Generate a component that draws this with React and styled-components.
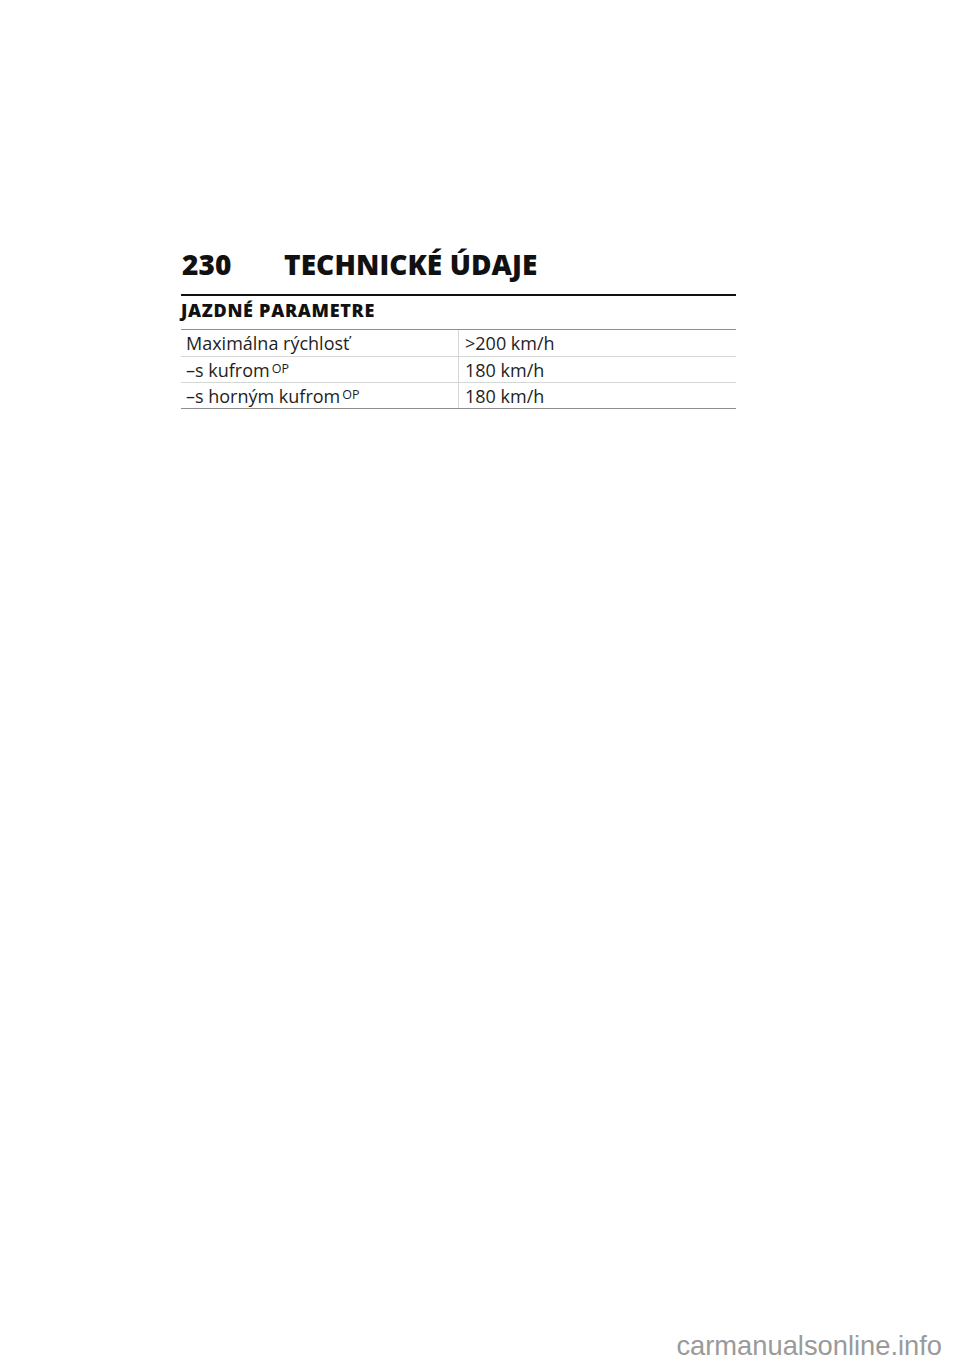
import React from "react";
import styled, { createGlobalStyle } from "styled-components";

const GlobalStyle = createGlobalStyle`
  html, body {
    margin: 0;
    padding: 0;
    background: #ffffff;
  }
  body {
    font-family: "Open Sans", "Liberation Sans", sans-serif;
    color: #1a1a1a;
  }
`;

const Page = styled.div`
  width: 960px;
  min-height: 1362px;
  display: flex;
  flex-direction: column;
  box-sizing: border-box;
`;

const Content = styled.div`
  margin: 244px 0 0 181px;
  width: 555px;
`;

const PageTitle = styled.h1`
  display: flex;
  margin: 0;
  height: 39px;
  align-items: center;
  font-family: "Open Sans", "Liberation Sans", sans-serif;
  font-weight: 800;
  font-size: 28px;
  letter-spacing: 0.1px;
  color: #111;
`;

const PageNumber = styled.span`
  width: 102px;
  padding-left: 1px;
`;

const SectionTitle = styled.h2`
  margin: 11px 0 0;
  border-top: 2px solid #111;
  padding-top: 3px;
  height: 35px;
  box-sizing: border-box;
  font-family: "Open Sans", "Liberation Sans", sans-serif;
  font-weight: 800;
  font-size: 18px;
  letter-spacing: 0.7px;
  line-height: 22px;
  color: #111;
`;

const Table = styled.div`
  border-top: 1px solid #8e8e8e;
  border-bottom: 1px solid #8e8e8e;
`;

const Row = styled.div`
  display: grid;
  grid-template-columns: 277px 1fr;
  height: 25px;
  &:first-child {
    height: 26px;
  }
  & + & {
    border-top: 1px solid #d3d7d5;
  }
`;

const Cell = styled.div`
  display: flex;
  align-items: center;
  padding-left: ${(p) => (p.$value ? "6px" : "5px")};
  border-left: ${(p) => (p.$value ? "1px solid #d3d7d5" : "none")};
  font-size: 18px;
  color: #1e1e1e;
  white-space: nowrap;
`;

const Sup = styled.sup`
  font-size: 12.5px;
  margin-left: 2px;
  position: relative;
  top: -1px;
`;

const Watermark = styled.div`
  margin-top: auto;
  align-self: flex-end;
  padding: 0 18px 3px 0;
  font-family: "Liberation Sans", Arial, sans-serif;
  font-size: 27.3px;
  color: #9a9a9a;
  line-height: 26px;
`;

const rows = [
  { label: "Maximálna rýchlosť", value: ">200 km/h" },
  { label: "–s kufrom", op: true, value: "180 km/h" },
  { label: "–s horným kufrom", op: true, value: "180 km/h" },
];

export default function App() {
  return (
    <>
      <GlobalStyle />
      <Page>
        <Content>
          <PageTitle>
            <PageNumber>230</PageNumber>
            TECHNICKÉ ÚDAJE
          </PageTitle>
          <SectionTitle>JAZDNÉ PARAMETRE</SectionTitle>
          <Table>
            {rows.map((r) => (
              <Row key={r.label}>
                <Cell>
                  {r.label}
                  {r.op && <Sup>OP</Sup>}
                </Cell>
                <Cell $value>{r.value}</Cell>
              </Row>
            ))}
          </Table>
        </Content>
        <Watermark>carmanualsonline.info</Watermark>
      </Page>
    </>
  );
}
